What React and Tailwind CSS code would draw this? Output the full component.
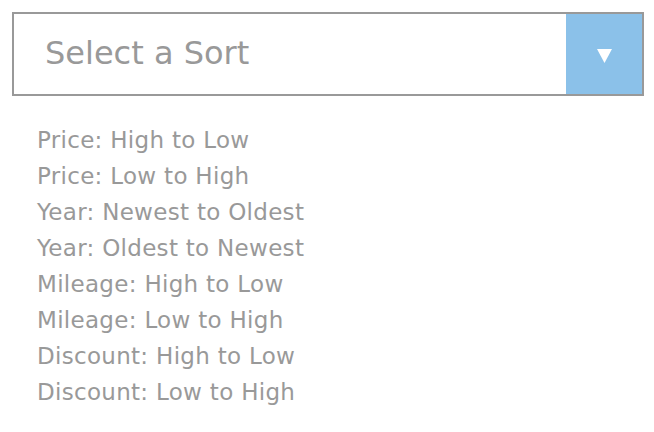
import React from "react";

const options = [
  "Price: High to Low",
  "Price: Low to High",
  "Year: Newest to Oldest",
  "Year: Oldest to Newest",
  "Mileage: High to Low",
  "Mileage: Low to High",
  "Discount: High to Low",
  "Discount: Low to High",
];

const App = () => {
  return (
    <div className="w-[654px] h-[432px] bg-white p-3" style={{ fontFamily: '"DejaVu Sans", sans-serif' }}>
      {/* Select box */}
      <div className="flex h-[84px] w-[632px] border-2 border-[#999999]">
        <div className="flex-1 flex items-center pl-[31px] pb-[2px] text-[32px] text-[#999999]">
          Select a Sort
        </div>
        <div className="w-[76px] bg-[#8bc1e9] flex items-center justify-center pt-[3px]">
          <svg width="15" height="14" viewBox="0 0 15 14">
            <polygon points="0,0 15,0 7.5,14" fill="#ffffff" />
          </svg>
        </div>
      </div>

      {/* Options */}
      <ul className="mt-[26px] pl-[25px] text-[23px] tracking-[0.3px] leading-[36px] text-[#999999]">
        {options.map((item, index) => (
          <li key={index}>{item}</li>
        ))}
      </ul>
    </div>
  );
};

export default App;
